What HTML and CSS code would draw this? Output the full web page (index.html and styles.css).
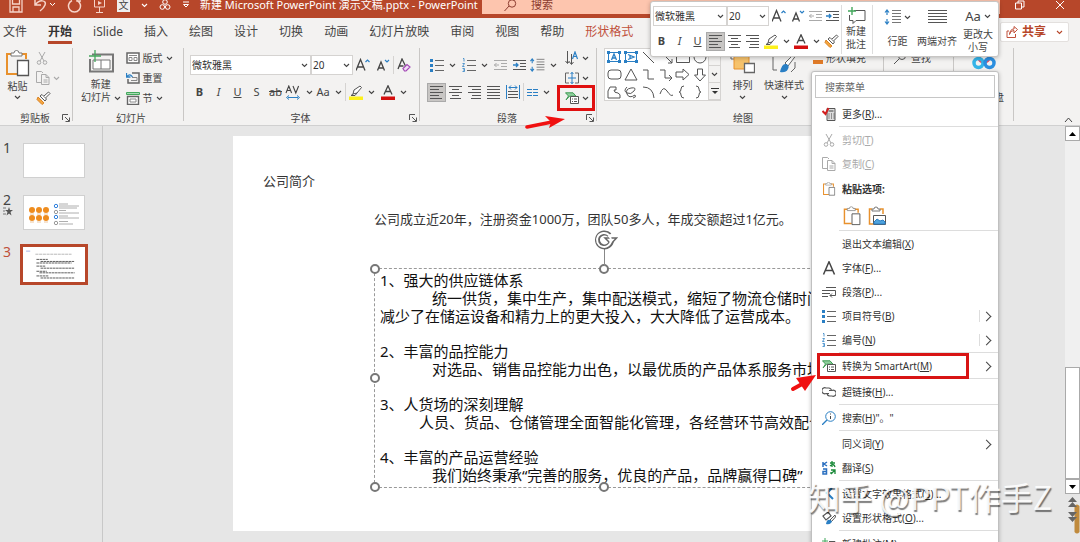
FILE: index.html
```html
<!DOCTYPE html>
<html lang="zh-CN">
<head>
<meta charset="utf-8">
<title>新建 Microsoft PowerPoint 演示文稿.pptx - PowerPoint</title>
<link rel="stylesheet" href="styles.css">
</head>
<body>
<svg class="defs" aria-hidden="true">
  <symbol id="chev" viewBox="0 0 7 5"><path d="M1 1l2.500 2.500L6 1" fill="none" stroke="currentColor" stroke-width="1.100"/></symbol>
  <symbol id="launch" viewBox="0 0 8 8"><path d="M.5 6V.5H6M3 3l4 4M7.500 3.500v4h-4" fill="none" stroke="#555"/></symbol>
  <symbol id="paste" viewBox="0 0 25 27"><path d="M6 4H2v20h10M16 4h5v5" fill="none" stroke="#e8912d" stroke-width="2"/><path d="M6 6V3h3q0-2.500 2.500-2.500T14 3h3v3z" fill="#fff" stroke="#777"/><path d="M12.500 10.500h11v15h-11z" fill="#fff" stroke="#555" stroke-width="1.300"/></symbol>
  <symbol id="cut" viewBox="0 0 12 14"><path d="M3 1l5 9M9 1L4 10" fill="none" stroke="currentColor"/><circle cx="3" cy="11.500" r="1.800" fill="none" stroke="currentColor"/><circle cx="9" cy="11.500" r="1.800" fill="none" stroke="currentColor"/></symbol>
  <symbol id="copy" viewBox="0 0 14 14"><path d="M5 11.500H.5V.5h5L7 2M5.500 3.500h4.500l3 3v7H5.500zM10 3.500v3h3M7.500 9h4M7.500 11h4" fill="none" stroke="currentColor"/></symbol>
  <symbol id="brush" viewBox="0 0 15 14"><path d="M2 6l6 6-2 1.500L1 8.500z" fill="#f4a640" stroke="#d98324"/><path d="M4 5l5 5 1.500-2L6 3.500z" fill="#fff" stroke="#555"/><path d="M8 5l4.500-4 1.500 1.500L9.500 7" fill="#fff" stroke="#555"/></symbol>
  <symbol id="growA" viewBox="0 0 14 14"><path d="M0 12.500L4.500 1.500l4.500 11M1.500 9h6" fill="none" stroke="#444" stroke-width="1.300"/><path d="M9.500 4l2-2 2 2" fill="none" stroke="#2a7fc4" stroke-width="1.200"/></symbol>
  <symbol id="shrinkA" viewBox="0 0 14 14"><path d="M1.500 12.500L5 4l3.500 8.500M3 10h4" fill="none" stroke="#444" stroke-width="1.300"/><path d="M9 2l2 2 2-2" fill="none" stroke="#2a7fc4" stroke-width="1.200"/></symbol>
  <symbol id="clearA" viewBox="0 0 14 14"><path d="M1 11L5 1l3.500 7M2.500 8h4" fill="none" stroke="#444" stroke-width="1.300"/><path d="M6 10.500l4-4 3 2.500-4 4H7.500z" fill="#f0dcf5" stroke="#a348b5" stroke-width="1.200"/></symbol>
  <symbol id="hilite" viewBox="0 0 14 15"><path d="M4 9l1-4 6-4 1.500 1.500L8 8z M4 9l-2 1.500h4L8 8" fill="#fff" stroke="#555"/><path d="M0 11.500h14v3.500H0z" fill="#fdf11b"/></symbol>
  <symbol id="fcolor" viewBox="0 0 14 15"><path d="M3 9.500L7 .8l4 8.700M4.500 6.500h5" fill="none" stroke="#444" stroke-width="1.300"/><path d="M0 11.500h14v3.500H0z" fill="#d40f0f"/></symbol>
  <symbol id="charsp" viewBox="0 0 16 15"><path d="M1 8l2.800-7 2.800 7M2 5.500h4M8 1l2.800 7 2.800-7" fill="none" stroke="#444" stroke-width="1.100"/><path d="M3 12.500h10M4 10.500l-2.500 2L4 14.500M12 10.500l2.500 2-2.500 2" fill="none" stroke="#2a7fc4"/></symbol>
  <symbol id="bullets" viewBox="0 0 14 14"><path d="M0 1h3v3H0zM0 6h3v3H0zM0 11h3v3H0z" fill="#2a7fc4"/><path d="M5 2.500h9M5 7.500h9M5 12.500h9" stroke="#666" fill="none"/></symbol>
  <symbol id="numbers" viewBox="0 0 14 14"><path d="M1 .5h1v3M.5 5.500h2l-2 3h2M.5 10.500h2v3h-2M1 12h1" fill="none" stroke="#2a7fc4" stroke-width=".8"/><path d="M5 2.500h9M5 7.500h9M5 12.500h9" stroke="#666" fill="none"/></symbol>
  <symbol id="outdent" viewBox="0 0 14 12"><path d="M0 1.500h13M7 4.500h6M7 7.500h6M0 10.500h13M5 6H0M2.500 4L.5 6l2 2" stroke="#aaa" fill="none"/></symbol>
  <symbol id="indent" viewBox="0 0 14 12"><path d="M0 1.500h13M7 4.500h6M7 7.500h6M0 10.500h13" stroke="#555" fill="none"/><path d="M0 6h5M3 4l2 2-2 2" stroke="#2a7fc4" stroke-width="1.300" fill="none"/></symbol>
  <symbol id="spacing" viewBox="0 0 17 16"><path d="M3 1v5M3 10v5M1 3.500L3 1l2 2.500M1 12.500L3 15l2-2.500" stroke="#2a7fc4" stroke-width="1.200" fill="none"/><path d="M8 1.500h9M8 4.500h9M8 7.500h9M8 10.500h9M8 13.500h9" stroke="#777" fill="none"/></symbol>
  <symbol id="al" viewBox="0 0 14 13"><path d="M0 .5h13M0 3.500h9M0 6.500h13M0 9.500h9M0 12.500h12" stroke="#555" fill="none"/></symbol>
  <symbol id="ac" viewBox="0 0 14 13"><path d="M0 .5h13M3 3.500h7M0 6.500h13M3 9.500h7M1 12.500h11" stroke="#555" fill="none"/></symbol>
  <symbol id="ar" viewBox="0 0 14 13"><path d="M0 .5h13M4 3.500h9M0 6.500h13M4 9.500h9M3 12.500h10" stroke="#555" fill="none"/></symbol>
  <symbol id="aj" viewBox="0 0 14 13"><path d="M0 .5h13M0 3.500h13M0 6.500h13M0 9.500h13M0 12.500h13" stroke="#555" fill="none"/></symbol>
  <symbol id="smart" viewBox="0 0 14 12"><path d="M.5.8H8l3 3.400H4.500L1 8l2.500-4z" fill="#8fcf9d" stroke="#3d9c53"/><path d="M5.500 4.500h8v7h-8z" fill="#fff" stroke="#555"/><path d="M7 7h1M9 7h3M7 9.500h1M9 9.500h3" stroke="#555"/></symbol>
  <symbol id="arrow" viewBox="0 0 42 14"><path d="M2 12L27 7" stroke="#f01010" stroke-width="3.500" stroke-linecap="round"/><path d="M20 1l20 3-16 9 2-6z" fill="#f01010"/></symbol>
</svg>

<div class="app">
  <header class="titlebar">
    <div class="quick">
      <button aria-label="保存"><svg width="14" height="16" viewBox="0 0 14 16"><path d="M1 1h12v14H1zM3.500 1v6h7V1M4 15v-5h6v5" fill="none" stroke="#f6d3c8" stroke-width="1.300"/></svg></button>
      <button aria-label="撤消"><svg width="22" height="16" viewBox="0 0 22 16"><path d="M1 2v6h6M1.500 8C5 2 13 3 11 8q-1 3-5 6" fill="none" stroke="#f6d3c8" stroke-width="1.500"/><path d="M16 6l2.500 2.500L21 6" fill="none" stroke="#fff"/></svg></button>
      <button aria-label="重复"><svg width="15" height="16" viewBox="0 0 15 16"><path d="M5 3.500a6 6 0 1 0 5 0M10 0v4h4" fill="none" stroke="#f6d3c8" stroke-width="1.500"/></svg></button>
      <button aria-label="从头放映"><svg width="13" height="16" viewBox="0 0 13 16"><path d="M0 2h13M1.500 2v8h10V2M6.500 10v5M3 15.500h7" fill="none" stroke="#f6d3c8"/><path d="M5 4v4l4-2z" fill="#f6d3c8"/></svg></button>
      <button class="lang">文</button>
      <button aria-label="更多语言"><svg width="7" height="5"><use href="#chev"/></svg></button>
      <button aria-label="形状"><svg width="12" height="12" viewBox="0 0 12 12"><circle cx="6" cy="3" r="2.300" fill="none" stroke="#fff"/><circle cx="3.300" cy="8" r="2.300" fill="none" stroke="#fff"/><circle cx="8.700" cy="8" r="2.300" fill="none" stroke="#fff"/></svg></button>
      <button aria-label="自定义"><svg width="8" height="8" viewBox="0 0 8 8"><path d="M1 1h6M1.500 3.500h5L4 6z" fill="none" stroke="#fff"/></svg></button>
    </div>
    <div class="doc">新建 Microsoft PowerPoint 演示文稿.pptx - PowerPoint</div>
    <button class="find"><svg width="13" height="13" viewBox="0 0 13 13"><circle cx="8" cy="4.500" r="3.700" fill="none" stroke="#8c3c30"/><path d="M5 7L.5 12" stroke="#8c3c30"/></svg>搜索</button>
    <div class="winbtns">
      <button aria-label="还原"><svg width="10" height="10" viewBox="0 0 10 10"><path d="M.5 3h6v6h-6zM3 3V1h6v6H6.500" fill="none" stroke="#fff"/></svg></button>
      <button aria-label="关闭"><svg width="10" height="10" viewBox="0 0 10 10"><path d="M1 1l8 8M9 1L1 9" stroke="#fff"/></svg></button>
    </div>
  </header>

  <nav class="tabs">
    <a href="#">文件</a><a href="#" class="on">开始</a><a href="#">iSlide</a><a href="#">插入</a><a href="#">绘图</a><a href="#">设计</a><a href="#">切换</a><a href="#">动画</a><a href="#">幻灯片放映</a><a href="#">审阅</a><a href="#">视图</a><a href="#">帮助</a><a href="#" class="ctx">形状格式</a>
    <button class="share"><svg width="12" height="12" viewBox="0 0 12 12"><path d="M3 5H1v6.500h8.500V8M3.500 8.500Q4 4.500 8 4.500V7L11.500 3.500 8 .5v2.500Q4 3 3.500 8.500z" fill="none" stroke="#c0503a"/></svg>共享<svg width="7" height="5"><use href="#chev"/></svg></button>
  </nav>

  <section class="ribbon">
    <div class="group g-clip">
      <div class="body">
        <button class="big"><svg width="25" height="27"><use href="#paste"/></svg><span>粘贴</span><svg width="7" height="5"><use href="#chev"/></svg></button>
        <div class="stack">
          <button class="dim" aria-label="剪切"><svg width="12" height="14"><use href="#cut"/></svg></button>
          <button class="dim" aria-label="复制"><svg width="14" height="14"><use href="#copy"/></svg><svg width="7" height="5"><use href="#chev"/></svg></button>
          <button aria-label="格式刷"><svg width="15" height="14"><use href="#brush"/></svg></button>
        </div>
      </div>
      <footer><span>剪贴板</span><svg width="8" height="8"><use href="#launch"/></svg></footer>
    </div>

    <div class="group g-slides">
      <div class="body">
        <button class="big"><svg width="26" height="24" viewBox="0 0 26 24"><path d="M4 4.500h21v17H2V9" fill="none" stroke="#777" stroke-width="2"/><path d="M5 10h17v9H5zM13 10v9" fill="#fff" stroke="#777"/><path d="M7 0v12M1 6h12" stroke="#43a85c" stroke-width="1.300"/></svg><span class="two">新建<br>幻灯片 <svg width="7" height="5"><use href="#chev"/></svg></span></button>
        <div class="stack">
          <button><svg width="14" height="12" viewBox="0 0 14 12"><path d="M1 1h12v10H1z" fill="#fff" stroke="#666" stroke-width="1.500"/><path d="M3 3.500h8M3 5.500h3v3H3zM8 5.500h3v3H8z" fill="none" stroke="#888"/></svg>版式<svg width="7" height="5"><use href="#chev"/></svg></button>
          <button><svg width="14" height="12" viewBox="0 0 14 12"><path d="M6 1h7v10H2V7" fill="none" stroke="#666" stroke-width="1.500"/><path d="M6 5.500h5v3H5" fill="none" stroke="#888"/><path d="M.5 1v4h4M1 4.500Q4 1 6.500 5" fill="none" stroke="#2a7fc4" stroke-width="1.300"/></svg>重置</button>
          <button><svg width="14" height="13" viewBox="0 0 14 13"><path d="M.5.5h13v2H.5z" fill="#a7dcb4" stroke="#43a85c"/><path d="M1.500 4.500h11v8h-11z" fill="#fff" stroke="#666" stroke-width="1.400"/><path d="M4 7h6v3H4z" fill="none" stroke="#888"/></svg>节<svg width="7" height="5"><use href="#chev"/></svg></button>
        </div>
      </div>
      <footer><span>幻灯片</span></footer>
    </div>

    <div class="group g-font">
      <div class="body rows">
        <div class="row">
          <label class="combo wide"><select aria-label="字体"><option>微软雅黑</option></select><svg width="7" height="5"><use href="#chev"/></svg></label>
          <label class="combo size"><select aria-label="字号"><option>20</option></select><svg width="7" height="5"><use href="#chev"/></svg></label>
          <button class="t20" aria-label="增大字号"><svg width="14" height="14"><use href="#growA"/></svg></button>
          <button class="t20" aria-label="减小字号"><svg width="14" height="14"><use href="#shrinkA"/></svg></button>
          <i class="vs"></i>
          <button class="t20" aria-label="清除格式"><svg width="14" height="14"><use href="#clearA"/></svg></button>
        </div>
        <div class="row">
          <button class="t19"><b>B</b></button><button class="t19"><em>I</em></button><button class="t19"><u>U</u></button><button class="t19">S</button><button class="t19"><s>ab</s></button>
          <button class="t28" aria-label="字符间距"><svg width="16" height="15"><use href="#charsp"/></svg><svg width="7" height="5"><use href="#chev"/></svg></button>
          <button class="t32">Aa<svg width="7" height="5"><use href="#chev"/></svg></button>
          <i class="vs"></i>
          <button class="t32" aria-label="突出显示"><svg width="14" height="15"><use href="#hilite"/></svg><svg width="7" height="5"><use href="#chev"/></svg></button>
          <button class="t32" aria-label="字体颜色"><svg width="14" height="15"><use href="#fcolor"/></svg><svg width="7" height="5"><use href="#chev"/></svg></button>
        </div>
      </div>
      <footer><span>字体</span><svg width="8" height="8"><use href="#launch"/></svg></footer>
    </div>

    <div class="group g-para">
      <div class="body">
        <div class="rows">
          <div class="row">
            <button class="t32" aria-label="项目符号"><svg width="14" height="14"><use href="#bullets"/></svg><svg width="7" height="5"><use href="#chev"/></svg></button>
            <button class="t32" aria-label="编号"><svg width="14" height="14"><use href="#numbers"/></svg><svg width="7" height="5"><use href="#chev"/></svg></button>
            <button class="t19" aria-label="减少缩进"><svg width="14" height="12"><use href="#outdent"/></svg></button>
            <button class="t19" aria-label="增加缩进"><svg width="14" height="12"><use href="#indent"/></svg></button>
            <button class="t28" aria-label="行距"><svg width="16" height="14"><use href="#spacing"/></svg><svg width="7" height="5"><use href="#chev"/></svg></button>
          </div>
          <div class="row">
            <button class="t19 sel" aria-label="左对齐"><svg width="14" height="13"><use href="#al"/></svg></button>
            <button class="t19" aria-label="居中"><svg width="14" height="13"><use href="#ac"/></svg></button>
            <button class="t19" aria-label="右对齐"><svg width="14" height="13"><use href="#ar"/></svg></button>
            <button class="t19" aria-label="两端对齐"><svg width="14" height="13"><use href="#aj"/></svg></button>
            <button class="t20" aria-label="分散对齐"><svg width="14" height="14" viewBox="0 0 14 14"><path d="M.5 0v14M13.500 0v14M3 2.500h8M5 .5l-2 2 2 2M9 .5l2 2-2 2" fill="none" stroke="#2a7fc4"/><path d="M2 6.500h10M2 9.500h10M2 12.500h10" stroke="#555"/></svg></button>
            <i class="vs"></i>
            <button class="t28" aria-label="分栏"><svg width="11" height="9" viewBox="0 0 11 9"><path d="M0 1.500h5M6 1.500h5M0 4.500h5M6 4.500h5M0 7.500h5M6 7.500h5" stroke="#2a7fc4"/></svg><svg width="7" height="5"><use href="#chev"/></svg></button>
          </div>
        </div>
        <div class="stack">
          <button aria-label="文字方向"><svg width="14" height="14" viewBox="0 0 14 14"><path d="M2.500 0v12M6.500 3v10M.5 10l2 2.500 2-2.500M4.500 11l2 2.500 2-2.500" fill="none" stroke="#555"/><path d="M7.500 8l2.500-7 2.500 7M8.500 5.500h3" fill="none" stroke="#2a7fc4" stroke-width="1.200"/></svg><svg width="7" height="5"><use href="#chev"/></svg></button>
          <button aria-label="对齐文本"><svg width="14" height="12" viewBox="0 0 14 12"><path d="M4 1H.5v10H4M10 1h3.500v10H10" fill="none" stroke="#666"/><path d="M3 6h8M7 0v12M5.500 2L7 .5 8.500 2M5.500 10L7 11.500 8.500 10" fill="none" stroke="#2a7fc4"/></svg><svg width="7" height="5"><use href="#chev"/></svg></button>
          <button class="marked" aria-label="转换为 SmartArt"><svg width="14" height="12"><use href="#smart"/></svg><svg width="7" height="5"><use href="#chev"/></svg></button>
        </div>
      </div>
      <footer><span>段落</span><svg width="8" height="8"><use href="#launch"/></svg></footer>
      <svg class="pointer" width="42" height="14"><use href="#arrow"/></svg>
    </div>

    <div class="group g-draw">
      <div class="body">
        <div class="gallery">
          <svg class="shapes" width="103" height="51" viewBox="0 0 103 51" fill="none" stroke="#555">
            <path d="M3.500 3.500h11v9h-11zM20.500 3.500h11v9h-11z" stroke="#2a7fc4"/><path d="M2 2h3v3H2zM13 2h3v3h-3zM2 11h3v3H2zM13 11h3v3h-3zM19 2h3v3h-3zM30 2h3v3h-3zM19 11h3v3h-3zM30 11h3v3h-3z" fill="#2a7fc4" stroke="none"/><path d="M6.500 11L9 5l2.500 6M7.500 9h3M23 5.500L29 8l-6 2.500M25 6.500v3" stroke="#2a7fc4" stroke-width="1.300"/>
            <path d="M38 3l11 11M56 3l11 11M67 10v4h-4M71.500 3.500h13v10h-13z"/><circle cx="95" cy="8" r="6"/>
            <rect x="3" y="21" width="13" height="9" rx="3"/><path d="M26 20l6 11H20zM38 21h5v9h6M55 21h5v8h7M64 26l3 3-3 3M71 23h7v-3l6 5.500-6 5.500v-3h-7zM92.500 20h5v6h3L95 32l-5.500-6h3z"/>
            <path d="M5 38h6v3h-2q0 3 4 3 3 1 2 5H3V42zM22 38q-4 4 0 6t7-2-3-3-4 6 8 1q2 2-2 3M38 38q10 0 11 11M55 45q3-9 7-3t6 4M79 37q-3 0-3 3t-2 3q2 0 2 3t3 3M91 37q3 0 3 3t2 3q-2 0-2 3t-3 3"/>
          </svg>
          <div class="gscroll"><button aria-label="上"></button><button aria-label="下"><svg width="7" height="5"><use href="#chev"/></svg></button><button aria-label="其他形状"><svg width="8" height="8" viewBox="0 0 8 8"><path d="M0 1.500h8" stroke="#333"/><path d="M1 4h6L4 7z" fill="#333"/></svg></button></div>
        </div>
        <button class="big"><svg width="25" height="24" viewBox="0 0 25 24"><path d="M1 1h10v8H1z" fill="#fff" stroke="#666"/><path d="M4 5h15v14H4z" fill="#f6c26b" stroke="#e8912d"/><path d="M14.500 13.500h10v9h-10z" fill="#fff" stroke="#666" stroke-width="1.300"/></svg><span>排列</span><svg width="7" height="5"><use href="#chev"/></svg></button>
        <button class="big"><svg width="27" height="24" viewBox="0 0 27 24"><path d="M2 2v18h4M24 12v6l-4 4" fill="none" stroke="#666"/><path d="M26 1L14 13l3 3L26 4z" fill="#fff" stroke="#666"/><path d="M9 22q2-9 6-8t2 5-8 3z" fill="#2a7fc4"/></svg><span>快速样式</span><svg width="7" height="5"><use href="#chev"/></svg></button>
        <div class="stack">
          <button><svg width="10" height="12" viewBox="0 0 10 12"><path d="M0 8h10v4H0z" fill="#e07b28"/></svg>形状填充</button>
          <button aria-label="形状轮廓"><svg width="10" height="13" viewBox="0 0 10 13"><path d="M1 8V1h8" fill="none" stroke="#555"/><path d="M0 9h10v4H0z" fill="#3a76c4"/></svg></button>
          <button aria-label="形状效果"><svg width="10" height="12" viewBox="0 0 10 12"><path d="M6 1L1 6v4h9" fill="none" stroke="#444" stroke-width="2"/></svg></button>
        </div>
      </div>
      <footer><span>绘图</span></footer>
    </div>

    <div class="group g-edit">
      <div class="body"><div class="stack">
        <button><svg width="14" height="12" viewBox="0 0 14 12"><circle cx="8" cy="4" r="3.500" fill="none" stroke="#555"/><path d="M5 7l-5 5" stroke="#555"/></svg>查找</button>
      </div></div>
    </div>
    <div class="group g-cloud">
      <div class="body"><button class="big"><svg width="24" height="20" viewBox="0 0 24 20" fill="none" stroke-width="3.500"><circle cx="12" cy="7" r="5" stroke="#e0506c"/><circle cx="6.500" cy="13" r="4.500" stroke="#35b4e8"/><circle cx="17.500" cy="13" r="4.500" stroke="#2b8fe0"/></svg><span class="two">保存到<br>百度网盘</span></button></div>
    </div>
    <button class="collapse" aria-label="折叠功能区"><svg width="9" height="6" viewBox="0 0 9 6"><path d="M1 5l3.500-4L8 5" fill="none" stroke="#444"/></svg></button>
  </section>

  <main class="work">
    <aside class="thumbs">
      <div class="th"><span>1</span><div class="mini"></div></div>
      <div class="th"><span>2<svg width="10" height="9" viewBox="0 0 10 9"><path d="M6 0l1 3h3L7.500 5l1 3.500L6 6.500 3.500 8.500l1-3.500L2 3h3z" fill="#555"/><path d="M0 1h3M0 4h2M0 7h3" stroke="#777"/></svg></span><div class="mini"><svg viewBox="0 0 60 33"><g fill="#ee8c1e"><circle cx="8" cy="14" r="3"/><circle cx="15" cy="14" r="3"/><circle cx="22" cy="14" r="3"/><circle cx="8" cy="22" r="3"/><circle cx="15" cy="22" r="3"/><circle cx="22" cy="22" r="3"/></g><path d="M6 18h4M13 18h4M20 18h4M6 26h4M13 26h4M20 26h4" stroke="#e6b98a" stroke-width=".8"/><g fill="#fff" stroke="#999"><circle cx="32" cy="10" r="1.700" stroke="#2f80dd"/><circle cx="32" cy="16" r="1.700"/><circle cx="32" cy="21" r="1.700" stroke="#2f80dd"/><circle cx="32" cy="27" r="1.700"/></g><path d="M35 8h9M35 10h20M35 12h18M35 14.500h7M35 17h20M35 20h9M35 22h20M35 25.500h9M35 28h14" stroke="#999" stroke-width=".8"/></svg></div></div>
      <div class="th cur"><span>3</span><div class="mini"><svg viewBox="0 0 60 33"><path d="M3 4h4" stroke="#8899dd" stroke-width=".7"/><path d="M12 7h35" stroke="#aaa" stroke-width=".8" stroke-dasharray="3 .6"/><path d="M13 12h11M17 14h33M13 15.500h34M13 18.500h9M17 20.500h33M13 23.500h10M16 25h34M13 28h12M17 30h33" stroke="#555" stroke-width=".9" stroke-dasharray="2.500 .5"/></svg></div></div>
    </aside>
    <div class="canvas">
      <article class="slide">
        <h1>公司简介</h1>
        <p class="lead">公司成立近20年，注册资金1000万，团队50多人，年成交额超过1亿元。</p>
        <div class="textbox">
          <section><p>1、强大的供应链体系</p><p class="in">统一供货，集中生产，集中配送模式，缩短了物流仓储时间</p><p>减少了在储运设备和精力上的更大投入，大大降低了运营成本。</p></section>
          <section><p>2、丰富的品控能力</p><p class="in">对选品、销售品控能力出色，以最优质的产品体系服务市场</p></section>
          <section><p>3、人货场的深刻理解</p><p class="in less">人员、货品、仓储管理全面智能化管理，各经营环节高效配合</p></section>
          <section><p>4、丰富的产品运营经验</p><p class="in">我们始终秉承“完善的服务，优良的产品，品牌赢得口碑”</p></section>
          <i class="h tl"></i><i class="h tc"></i><i class="h tr"></i><i class="h ml"></i><i class="h mr"></i><i class="h bl"></i><i class="h bc"></i><i class="h br"></i>
          <svg class="rot" width="24" height="36" viewBox="0 0 24 36"><path d="M10.500 18v18" stroke="#888"/><path d="M17.500 10a7 7 0 1 1-2-5" fill="none" stroke="#666" stroke-width="5"/><path d="M11 8h11.500L17 14z" fill="#fff" stroke="#666" stroke-width="1.500"/><path d="M17 10a7 7 0 1 1-2-5l2 4" fill="none" stroke="#fff" stroke-width="2"/></svg>
        </div>
      </article>
    </div>
    <div class="scroll">
      <button aria-label="向上滚动"><svg width="7" height="4" viewBox="0 0 7 4"><path d="M0 4l3.500-4L7 4z"/></svg></button>
      <div class="track"><div class="thumb"></div></div>
      <button aria-label="向下滚动"><svg width="7" height="4" viewBox="0 0 7 4"><path d="M0 0l3.500 4L7 0z"/></svg></button>
      <svg class="pages" width="15" height="48" viewBox="0 0 15 48"><path d="M9.500 12q2.500-3 5 0v26q-2.500 3-5 0z" fill="#c08a3c"/><path d="M3 8l4.500-5L12 8zM3 13l4.500-5 4.500 5zM3 18h9l-4.500 5zM3 23h9l-4.500 5z" fill="#666"/></svg>
    </div>
  </main>

  <div class="minibar">
    <div class="mb-left">
      <div class="row">
        <label class="combo mfont"><select aria-label="字体"><option>微软雅黑</option></select><svg width="7" height="5"><use href="#chev"/></svg></label>
        <label class="combo size"><select aria-label="字号"><option>20</option></select><svg width="7" height="5"><use href="#chev"/></svg></label>
        <button class="t19" aria-label="增大字号"><svg width="14" height="14"><use href="#growA"/></svg></button>
        <button class="t19" aria-label="减小字号"><svg width="14" height="14"><use href="#shrinkA"/></svg></button>
        <button class="t17" aria-label="减少缩进"><svg width="14" height="12"><use href="#outdent"/></svg></button>
        <button class="t17" aria-label="增加缩进"><svg width="14" height="12"><use href="#indent"/></svg></button>
      </div>
      <div class="row">
        <button class="t17"><b>B</b></button><button class="t19"><em>I</em></button><button class="t17"><u>U</u></button>
        <button class="t19 sel" aria-label="左对齐"><svg width="14" height="13"><use href="#al"/></svg></button>
        <button class="t19" aria-label="居中"><svg width="14" height="13"><use href="#ac"/></svg></button>
        <button class="t17" aria-label="右对齐"><svg width="14" height="13"><use href="#ar"/></svg></button>
        <button class="t32" aria-label="突出显示"><svg width="14" height="15"><use href="#hilite"/></svg><svg width="7" height="5"><use href="#chev"/></svg></button>
        <button class="t28" aria-label="字体颜色"><svg width="14" height="15"><use href="#fcolor"/></svg><svg width="7" height="5"><use href="#chev"/></svg></button>
        <button class="t20" aria-label="格式刷"><svg width="15" height="14"><use href="#brush"/></svg></button>
      </div>
    </div>
    <button class="mbig note"><svg width="19" height="19" viewBox="0 0 19 19"><path d="M7 4.500h11v10H9l-3 3v-3H2.500V9" fill="none" stroke="#555"/><path d="M5 1v8M1 5h8" stroke="#43a85c" stroke-width="1.400"/></svg><span>新建<br>批注</span></button>
    <button class="mbig one"><i><svg width="17" height="16"><use href="#spacing"/></svg><svg width="7" height="5"><use href="#chev"/></svg></i><span>行距</span></button>
    <button class="mbig one"><i><svg width="19" height="16" viewBox="0 0 19 16"><path d="M0 1.500h19M0 4.500h19M0 7.500h19M0 10.500h19M0 13.500h19" stroke="#555"/></svg></i><span>两端对齐</span></button>
    <button class="mbig"><i class="aa">Aa<svg width="7" height="5"><use href="#chev"/></svg></i><span>更改大<br>小写</span></button>
  </div>

  <div class="menu">
    <input type="text" placeholder="搜索菜单" aria-label="搜索菜单">
    <button><svg width="13" height="14" viewBox="0 0 13 14"><path d="M4.500 1.500h8v12h-8z" fill="#ddd" stroke="#555"/><path d="M6 4h5M6 7h1M8.500 7h1M11 7h1M6 9h1M8.500 9h1M11 9h1M6 11h1M8.500 11h1M11 11h1" stroke="#444"/><path d="M0 4l3 3 3-6" fill="none" stroke="#d21f1f" stroke-width="2"/></svg><span>更多(<u>R</u>)...</span></button>
    <hr>
    <button class="dim" disabled><svg width="12" height="14"><use href="#cut"/></svg><span>剪切(<u>T</u>)</span></button>
    <button class="dim" disabled><svg width="14" height="14"><use href="#copy"/></svg><span>复制(<u>C</u>)</span></button>
    <div class="head"><svg width="13" height="14" viewBox="0 0 25 27"><use href="#paste"/></svg><span>粘贴选项:</span></div>
    <div class="opts">
      <button aria-label="使用目标主题"><svg width="18" height="20" viewBox="0 0 25 27"><use href="#paste"/></svg></button>
      <button aria-label="图片"><svg width="18" height="20" viewBox="0 0 18 20"><path d="M4 3H1.500v15H5M12 3h3v5" fill="none" stroke="#e8912d" stroke-width="1.500"/><path d="M4 5V3h2q0-2 2-2t2 2h2v2z" fill="#fff" stroke="#777"/><path d="M5.500 9.500h12v9h-12z" fill="#fff" stroke="#555"/><path d="M6 16l3-3 3 2 3-1 2 2v2H6z" fill="#4fa3dd" stroke="#2a7fc4"/></svg></button>
    </div>
    <hr>
    <button><svg width="14" height="14"></svg><span>退出文本编辑(<u>X</u>)</span></button>
    <button><svg width="14" height="14" viewBox="0 0 14 14"><path d="M1.500 13.500L7 .8l5.500 12.700M3.500 9.500h7" fill="none" stroke="#444" stroke-width="1.500"/></svg><span>字体(<u>F</u>)...</span></button>
    <button><svg width="14" height="13" viewBox="0 0 14 13"><path d="M4 1.500h10M0 4.500h13.500v5H8M10 7.500l-2 2 2 2M0 7.500h8M0 10.500h6" fill="none" stroke="#555"/></svg><span>段落(<u>P</u>)...</span></button>
    <button class="sub split"><svg width="14" height="14"><use href="#bullets"/></svg><span>项目符号(<u>B</u>)</span></button>
    <button class="sub split"><svg width="14" height="14"><use href="#numbers"/></svg><span>编号(<u>N</u>)</span></button>
    <hr>
    <button class="sub target"><svg width="14" height="12"><use href="#smart"/></svg><span>转换为 SmartArt(<u>M</u>)</span></button>
    <hr>
    <button><svg width="14" height="10" viewBox="0 0 14 10"><path d="M7 6.500H4A3 3 0 1 1 4 1h3q2.500.5 2.500 3M7 3.500h3A3 3 0 1 1 10 9H7.500Q5 8.500 5 6" fill="none" stroke="#555" stroke-width="1.200"/></svg><span>超链接(<u>H</u>)...</span></button>
    <hr>
    <button><svg width="14" height="14" viewBox="0 0 14 14"><circle cx="8.500" cy="5.500" r="4.800" fill="none" stroke="#2a7fc4"/><path d="M5 9l-5 5" stroke="#2a7fc4" stroke-width="1.300"/><path d="M8.500 2.500v1M8.500 5v3" stroke="#444"/></svg><span>搜索(<u>H</u>)"。"</span></button>
    <hr>
    <button class="sub"><svg width="14" height="14"></svg><span>同义词(<u>Y</u>)</span></button>
    <button><svg width="14" height="14" viewBox="0 0 14 14" fill="none"><path d="M1 1v5M5 1L2 3l3 2M1 8h3.500v5H1v-2.500h3" stroke="#2a6fc0" stroke-width="1.500"/><path d="M8 2h5M10 0v6M8 5q4-3 5 1M9 9h4v4M9 13l4-4M9 11v2" stroke="#1b8a3a" stroke-width="1.300"/></svg><span>翻译(<u>S</u>)</span></button>
    <hr>
    <button><svg width="14" height="14" viewBox="0 0 14 14"><path d="M10 1L5 6l6 6" fill="none" stroke="#2a7fc4" stroke-width="2"/></svg><span>设置文字效果格式(<u>S</u>)...</span></button>
    <button><svg width="14" height="14" viewBox="0 0 14 14"><path d="M1 5l5-4 3 4-5 4z" fill="#fff" stroke="#555" stroke-width="1.200"/><path d="M13 4L8 9l1.500 1.500L13.500 6z" fill="#fff" stroke="#555"/><path d="M4 13q1-5 4-4t1 3-5 1z" fill="#2a7fc4"/></svg><span>设置形状格式(<u>O</u>)...</span></button>
    <hr>
    <button><svg width="14" height="14" viewBox="0 0 14 14"><path d="M7 4.500h6v6H7l-3 3v-3H2" fill="none" stroke="#555"/><path d="M3 1v7M0 4h6" stroke="#43a85c"/></svg><span>新建批注(<u>M</u>)</span></button>
    <svg class="pointer2" width="27" height="18" viewBox="0 0 27 18"><path d="M3 15l11-6" stroke="#f01010" stroke-width="4" stroke-linecap="round"/><path d="M6 4L26 1 15 17z" fill="#f01010"/></svg>
  </div>
  <div class="mark">知乎 @PPT作手Z</div>
</div>
</body>
</html>
```

FILE: styles.css
```css
* { box-sizing: border-box; }
body { margin: 0; font: 10px/14px "Noto Sans", "Noto Sans CJK SC", sans-serif; color: #444; }
button { margin: 0; padding: 0; border: 0; background: none; font: inherit; color: inherit; display: flex; align-items: center; }
svg { display: block; flex: none; }
.defs { position: absolute; width: 0; height: 0; }
.app { position: relative; height: 100vh; display: flex; flex-direction: column; overflow: hidden; background: #e6e6e6; }

.titlebar { flex: none; height: 18px; display: flex; background: #b7472a; color: #fff; }
.quick { width: 200px; height: 10px; display: flex; align-items: center; gap: 11px; padding-left: 9px; }
.quick .lang { width: 13px; height: 14px; background: #eee; color: #444; justify-content: center; }
.doc { width: 282px; height: 14px; font-size: 11px; line-height: 10px; white-space: nowrap; }
.find { flex: 1; height: 14px; padding: 0 22px 4px; gap: 14px; background: #fdc5ae; color: #8c3c30; font-size: 11px; line-height: 10px; }
.winbtns { width: 80px; height: 10px; display: flex; justify-content: space-between; padding: 0 15px; }

.tabs { flex: none; height: 28px; display: flex; align-items: center; gap: 21px; padding-left: 3px; background: #f3f2f1; font-size: 12px; line-height: 18px; }
.tabs a { color: #444; text-decoration: none; padding-top: 3px; border-bottom: 3px solid transparent; white-space: nowrap; }
.tabs .on { font-weight: 700; color: #333; border-color: #b7472a; }
.tabs .ctx { color: #c0503a; }
.share { margin-left: auto; margin-right: 11px; height: 20px; padding: 0 5px; gap: 4px; background: #fff; border: 1px solid #e3e0de; border-radius: 2px; color: #b7472a; font-weight: 700; }
.share svg:last-child { margin-left: 6px; }

.ribbon { flex: none; height: 80px; display: flex; background: #f3f2f1; border-bottom: 1px solid #d0d0d0; }
.group { position: relative; display: flex; flex-direction: column; flex: none; }
.group::after { content: ""; position: absolute; right: 0; top: 2px; bottom: 4px; width: 1px; background: #c9c7c5; }
.body { flex: 1; display: flex; padding-top: 2px; }
.group footer { height: 15px; display: flex; align-items: center; padding: 0 3px 0 8px; }
.group footer span { flex: 1; text-align: center; }
.big { flex-direction: column; justify-content: space-between; height: 54px; padding: 2px 0; text-align: center; white-space: nowrap; }
.two { line-height: 13px; }
.two svg { display: inline-block; vertical-align: middle; }
.stack { display: flex; flex-direction: column; }
.stack button { height: 20px; gap: 3px; white-space: nowrap; }
.rows { display: flex; flex-direction: column; gap: 7px; padding-top: 7px; }
.row { display: flex; align-items: center; height: 20px; }
.row button { height: 19px; justify-content: center; gap: 5px; font-size: 11px; }
.t17 { width: 17px; }
.t19 { width: 19px; }
.t20 { width: 20px; }
.t28 { width: 28px; }
.t32 { width: 32px; }
.sel { background: #c8c6c4; outline: 1px solid #aaa; outline-offset: -1px; }
.vs { width: 1px; height: 18px; background: #d5d3d1; }
.dim { color: #aaa; }
.combo { display: grid; align-items: center; height: 20px; background: #fff; border: 1px solid #d5d3d1; }
.combo select, .combo svg { grid-area: 1 / 1; }
.combo select { appearance: none; width: 100%; border: 0; padding: 0 1px; background: none; font: inherit; color: #333; }
.combo svg { justify-self: end; margin-right: 2px; }
.wide { width: 121px; }
.size { width: 42px; }
.mfont { width: 74px; }

.g-clip { width: 73px; }
.g-clip .body { padding-left: 5px; gap: 6px; }
.g-slides { width: 111px; }
.g-slides .body { padding-left: 8px; gap: 5px; }
.g-slides .big { height: 58px; }
.g-font { width: 236px; }
.g-font .body { padding: 9px 0 0 6px; }
.g-para { width: 177px; }
.g-para .body { padding-left: 7px; gap: 8px; }
.g-draw { width: 287px; }
.g-draw .body { padding-left: 7px; gap: 9px; }
.g-edit { width: 70px; }
.g-edit .body { padding-left: 10px; }
.g-cloud { width: 60px; }
.g-cloud .body { padding-left: 10px; }
.g-cloud .big { height: 58px; }
.marked { position: relative; }
.marked::after { content: ""; position: absolute; inset: -3px -6px -3px -8px; border: 3px solid #e01010; }
.pointer { position: absolute; right: 30px; bottom: -4px; z-index: 2; }
.gallery { display: flex; height: 53px; background: #fff; border: 1px solid #d5d3d1; }
.gscroll { display: flex; flex-direction: column; width: 12px; border-left: 1px solid #d5d3d1; background: #f3f2f1; }
.gscroll button { flex: 1; justify-content: center; border-bottom: 1px solid #d5d3d1; }
.collapse { margin-left: auto; align-self: flex-end; padding: 0 7px 2px 0; }

.work { flex: 1; min-height: 0; display: flex; }
.thumbs { width: 103px; padding: 17px 0 0 3px; border-right: 1px solid #c8c8c8; display: flex; flex-direction: column; gap: 17px; }
.th { display: flex; gap: 11px; height: 35px; }
.th span { width: 9px; font-size: 14px; line-height: 10px; color: #444; }
.th span svg { margin-top: 2px; }
.mini { width: 62px; background: #fff; border: 1px solid #d0d0d0; }
.cur span { color: #c0503a; }
.cur .mini { border: 0; outline: 3px solid #b7472a; outline-offset: 0; }
.canvas { flex: 1; display: flex; justify-content: center; padding: 10px 0 11px; }
.slide { position: relative; height: 100%; aspect-ratio: 16 / 9; background: #fff; color: #333; white-space: nowrap; }
.slide h1, .slide p { margin: 0; font-weight: 400; }
.slide h1, .lead { position: absolute; font-size: 13px; line-height: 18px; }
.slide h1 { left: 30px; top: 36px; }
.lead { left: 141px; top: 74px; }
.textbox { position: absolute; left: 141px; top: 132px; width: 461px; height: 220px; padding: 2px 5px; border: 1px dashed #999; font-size: 15px; line-height: 18px; color: #111; }
.textbox section { margin-bottom: 17px; }
.textbox .in { padding-left: 52px; }
.textbox .less { padding-left: 39px; }
.h { position: absolute; width: 10px; height: 10px; margin: -5px; border: 2px solid #777; border-radius: 50%; background: #fff; }
.tl, .tc, .tr { top: 0; }
.ml, .mr { top: 50%; }
.bl, .bc, .br { top: 100%; }
.tl, .ml, .bl { left: 0; }
.tc, .bc { left: 50%; }
.tr, .mr, .br { left: 100%; }
.rot { position: absolute; left: 219px; top: -39px; }
.scroll { width: 15px; display: flex; flex-direction: column; background: #f0f0f0; }
.scroll button { height: 15px; justify-content: center; background: #fff; border: 1px solid #aaa; }
.track { flex: 1; display: flex; flex-direction: column; justify-content: flex-end; }
.thumb { height: 33%; background: #fff; border: 1px solid #aaa; }
.pages { background: #e6e6e6; }

.minibar { position: absolute; right: 81px; top: 1px; height: 56px; display: flex; background: #fff; border: 1px solid #c8c6c4; border-radius: 3px; box-shadow: 0 1px 4px rgba(0, 0, 0, .25); padding: 3px 2px 2px; }
.mb-left { display: flex; flex-direction: column; gap: 5px; padding-top: 1px; }
.mbig { flex-direction: column; text-align: center; padding: 0 3px; line-height: 13px; white-space: nowrap; }
.note { margin-right: 8px; border: solid #ddd; border-width: 0 1px; padding: 1px 6px 0 4px; }
.mbig i { display: flex; align-items: center; gap: 3px; height: 24px; font-style: normal; }
.mbig .aa { font-size: 13px; }
.one span { padding-top: 6px; }

.menu { position: absolute; right: 81px; top: 71px; width: 188px; display: flex; flex-direction: column; background: #fff; border: 1px solid #c0c0c0; border-radius: 3px; box-shadow: 0 1px 4px rgba(0, 0, 0, .25); padding: 3px 0; color: #333; }
.menu input { margin: 0 3px 4px; height: 23px; border: 1px solid #c6c6c6; padding: 0 9px; font: inherit; }
.menu input::placeholder { color: #666; }
.menu > button, .head { position: relative; display: flex; align-items: center; height: 24px; padding-left: 10px; gap: 6px; white-space: nowrap; }
.menu > button svg, .head svg { width: 14px; }
.menu .dim { color: #aaa; }
.head { height: 26px; font-weight: 700; }
.opts { display: flex; gap: 7px; height: 28px; padding-left: 31px; }
.menu hr { width: 159px; height: 1px; margin: 0 0 1px auto; border: 0; background: #ddd; }
.sub::after { content: ""; width: 6px; height: 6px; margin: 0 8px 0 auto; border: solid #444; border-width: 1px 1px 0 0; transform: rotate(45deg); }
.split::before { content: ""; position: absolute; right: 18px; height: 12px; width: 1px; background: #ddd; }
.target::before { content: ""; position: absolute; inset: -1px 29px -1px 5px; border: 3px solid #d81414; }
.pointer2 { position: absolute; left: -22px; top: 302px; }
.mark { position: absolute; right: 28px; bottom: 26px; font: 32px/40px "Noto Sans CJK SC", sans-serif; color: rgba(255, 255, 255, .9); text-shadow: 1px 2px 1px rgba(0, 0, 0, .5); white-space: nowrap; }
```
